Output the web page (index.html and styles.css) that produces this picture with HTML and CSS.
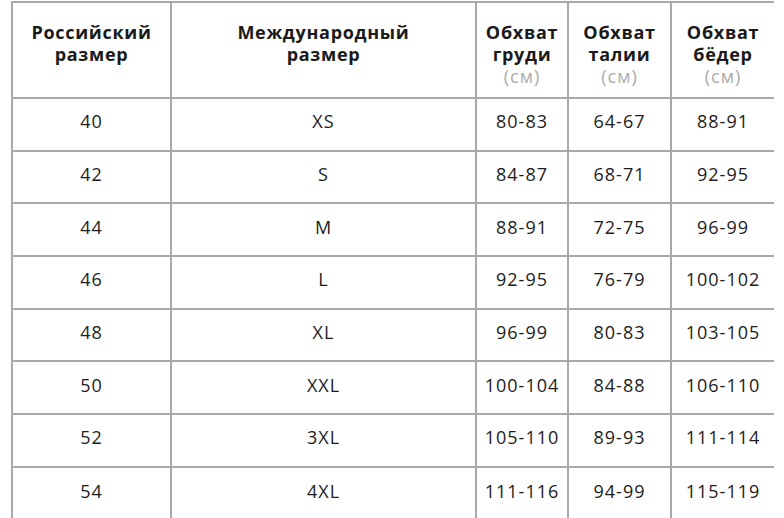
FILE: index.html
```html
<!DOCTYPE html>
<html lang="ru">
<head>
<meta charset="utf-8">
<title>Таблица размеров</title>
<link rel="stylesheet" href="styles.css">
</head>
<body>
<table class="sizes">
  <colgroup>
    <col class="c1"><col class="c2"><col class="c3"><col class="c4"><col class="c5">
  </colgroup>
  <thead>
    <tr>
      <th>Российский<br>размер</th>
      <th>Международный<br>размер</th>
      <th>Обхват<br>груди<br><span class="unit">(см)</span></th>
      <th>Обхват<br>талии<br><span class="unit">(см)</span></th>
      <th>Обхват<br>бёдер<br><span class="unit">(см)</span></th>
    </tr>
  </thead>
  <tbody>
    <tr><td>40</td><td>XS</td><td>80-83</td><td>64-67</td><td>88-91</td></tr>
    <tr><td>42</td><td>S</td><td>84-87</td><td>68-71</td><td>92-95</td></tr>
    <tr><td>44</td><td>M</td><td>88-91</td><td>72-75</td><td>96-99</td></tr>
    <tr><td>46</td><td>L</td><td>92-95</td><td>76-79</td><td>100-102</td></tr>
    <tr><td>48</td><td>XL</td><td>96-99</td><td>80-83</td><td>103-105</td></tr>
    <tr><td>50</td><td>XXL</td><td>100-104</td><td>84-88</td><td>106-110</td></tr>
    <tr><td>52</td><td>3XL</td><td>105-110</td><td>89-93</td><td>111-114</td></tr>
    <tr><td>54</td><td>4XL</td><td>111-116</td><td>94-99</td><td>115-119</td></tr>
  </tbody>
</table>
</body>
</html>
```

FILE: styles.css
```css
html, body {
  margin: 0;
  padding: 0;
  background: #ffffff;
}

body {
  font-family: "Open Sans", "Noto Sans", sans-serif;
  color: #1c1c1c;
  overflow: hidden;
}

.sizes {
  border-collapse: collapse;
  table-layout: fixed;
  width: 762px;
  margin: 1px 0 0 11px;
}

.c1 { width: 159px; }
.c2 { width: 305px; }
.c3 { width: 92px; }
.c4 { width: 103px; }
.c5 { width: 103px; }

.sizes th,
.sizes td {
  border: 2px solid #a9a9a9;
  text-align: center;
  padding: 0;
}

.sizes th:last-child,
.sizes td:last-child {
  border-right: none;
}

.sizes tbody tr:last-child td {
  border-bottom: none;
}

.sizes th {
  height: 96px;
  vertical-align: top;
  padding-top: 18px;
  box-sizing: border-box;
  font-weight: 700;
  font-size: 18px;
  line-height: 22px;
  letter-spacing: 0.7px;
  color: #1a1a1a;
}

.sizes td {
  height: 52.7px;
  vertical-align: middle;
  font-size: 18px;
  font-weight: 500;
  padding-bottom: 6px;
  box-sizing: border-box;
  letter-spacing: 1px;
}

.unit {
  font-weight: 400;
  color: #ababab;
  letter-spacing: 1px;
}
```
